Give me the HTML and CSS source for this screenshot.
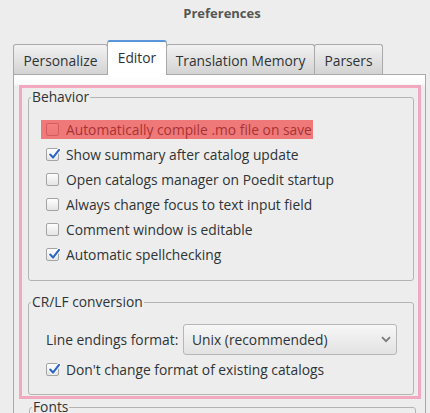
FILE: index.html
```html
<!DOCTYPE html>
<html>
<head>
<meta charset="utf-8">
<link rel="stylesheet" href="styles.css">
</head>
<body>
<div class="window">
  <div class="titlebar">Preferences</div>
  <div class="notebook">
    <div class="tabs">
      <div class="tab tab-personalize">Personalize</div>
      <div class="tab tab-editor active">Editor</div>
      <div class="tab tab-tm">Translation Memory</div>
      <div class="tab tab-parsers">Parsers</div>
    </div>
    <div class="panel">
      <div class="highlight-box">
        <fieldset class="frame">
          <legend>Behavior</legend>
          <div class="rows">
            <div class="row"><span class="item flagged"><span class="check"></span>Automatically compile .mo file on save</span></div>
            <div class="row"><span class="item"><span class="check checked"><svg viewBox="0 0 15 15" width="15" height="15"><path d="M3.2 7.6 L6 10.6 L12 2.8" fill="none" stroke="#ffffff" stroke-width="4" stroke-linecap="round" stroke-linejoin="round"/><path d="M3.2 7.6 L6 10.6 L12 2.8" fill="none" stroke="#2f67c4" stroke-width="2.2" stroke-linecap="round" stroke-linejoin="round"/></svg></span>Show summary after catalog update</span></div>
            <div class="row"><span class="item"><span class="check"></span>Open catalogs manager on Poedit startup</span></div>
            <div class="row"><span class="item"><span class="check"></span>Always change focus to text input field</span></div>
            <div class="row"><span class="item"><span class="check"></span>Comment window is editable</span></div>
            <div class="row"><span class="item"><span class="check checked"><svg viewBox="0 0 15 15" width="15" height="15"><path d="M3.2 7.6 L6 10.6 L12 2.8" fill="none" stroke="#ffffff" stroke-width="4" stroke-linecap="round" stroke-linejoin="round"/><path d="M3.2 7.6 L6 10.6 L12 2.8" fill="none" stroke="#2f67c4" stroke-width="2.2" stroke-linecap="round" stroke-linejoin="round"/></svg></span>Automatic spellchecking</span></div>
          </div>
        </fieldset>
        <fieldset class="frame crlf">
          <legend>CR/LF conversion</legend>
          <div class="rows rows-crlf">
            <div class="select-row">
              <span class="select-label">Line endings format:</span>
              <div class="select">
                <span>Unix (recommended)</span>
                <svg class="chevron" viewBox="0 0 10 7" width="10" height="7"><path d="M1 1.2 L5 5.2 L9 1.2" fill="none" stroke="#7b7b7b" stroke-width="1.8"/></svg>
              </div>
            </div>
            <div class="row row-after-select"><span class="item"><span class="check checked"><svg viewBox="0 0 15 15" width="15" height="15"><path d="M3.2 7.6 L6 10.6 L12 2.8" fill="none" stroke="#ffffff" stroke-width="4" stroke-linecap="round" stroke-linejoin="round"/><path d="M3.2 7.6 L6 10.6 L12 2.8" fill="none" stroke="#2f67c4" stroke-width="2.2" stroke-linecap="round" stroke-linejoin="round"/></svg></span>Don't change format of existing catalogs</span></div>
          </div>
        </fieldset>
      </div>
      <fieldset class="frame fonts">
        <legend>Fonts</legend>
        <div class="fonts-body"></div>
      </fieldset>
    </div>
  </div>
</div>
</body>
</html>
```
FILE: styles.css
```css
html, body {
  margin: 0;
  padding: 0;
  background: #ededed;
}
body {
  font-family: "Open Sans", "Noto Sans", sans-serif;
  font-size: 13.8px;
  color: #2e3436;
}
.window {
  width: 430px;
  height: 413px;
  overflow: hidden;
}
.titlebar {
  height: 26px;
  line-height: 26px;
  text-align: center;
  padding-left: 14px;
  font-weight: bold;
  font-size: 13px;
  color: #555753;
}
.notebook {
  margin: 14px 0 0 13px;
  width: 413px;
}
.tabs {
  display: flex;
  align-items: flex-end;
  height: 34px;
}
.tab {
  box-sizing: border-box;
  height: 30px;
  border: 1px solid #a9a9a9;
  border-bottom: none;
  border-radius: 3px 3px 0 0;
  background: linear-gradient(#f2f2f2, #d3d3d3);
  display: flex;
  align-items: center;
  justify-content: center;
  margin-right: -1px;
  color: #2e3436;
  padding-top: 1px;
}
.tab-personalize { width: 95px; }
.tab-editor { width: 60px; }
.tab-tm { width: 149px; }
.tab-parsers { width: 69px; }
.tab.active {
  height: 35px;
  margin-bottom: -1px;
  background: #ffffff;
  border-top: 2px solid #5a97d8;
  position: relative;
  z-index: 1;
  padding-top: 0;
  padding-bottom: 3px;
}
.panel {
  border: 1px solid #a9a9a9;
  border-bottom: none;
  background: linear-gradient(#ffffff 0, #fbfbfb 9px, #ededed 11px);
  padding: 10px 4px 0 5px;
  height: 400px;
}
.highlight-box {
  border: 3px solid #f2a8bf;
  padding: 1px 4px 1px 6px;
}
.frame {
  margin: 0;
  padding: 0;
  border: 1px solid #b4b4b4;
  border-radius: 3px;
  min-width: 0;
}
.frame legend {
  margin-left: 2px;
  padding: 0 1px;
  line-height: 16px;
  color: #2e3436;
}
.rows {
  padding: 12px 0 13px 12px;
}
.row {
  height: 25px;
  display: flex;
  align-items: center;
}
.item {
  position: relative;
  display: inline-flex;
  align-items: center;
  height: 19px;
  padding: 0 1px 0 5px;
  white-space: nowrap;
}
.flagged::after {
  content: "";
  position: absolute;
  left: 0;
  top: 0;
  right: 0;
  bottom: 0;
  background: rgba(240, 50, 50, 0.62);
}
.check {
  position: relative;
  box-sizing: border-box;
  width: 13px;
  height: 13px;
  margin-right: 7px;
  border: 1px solid #a4a4a4;
  border-radius: 2px;
  background: linear-gradient(#fefefe, #e4e4e4);
  flex: none;
}
.check svg {
  position: absolute;
  left: 0;
  top: -2px;
}
.crlf {
  margin-top: 13px;
}
.rows-crlf {
  padding: 14px 0 12px 12px;
}
.select-row {
  display: flex;
  align-items: center;
  padding-left: 5px;
  height: 31px;
}
.select-label {
  width: 137px;
  flex: none;
  white-space: nowrap;
}
.select {
  box-sizing: border-box;
  width: 214px;
  height: 31px;
  border: 1px solid #b7b7b7;
  border-radius: 3px;
  background: linear-gradient(#f7f7f7, #e2e2e2);
  display: flex;
  align-items: center;
  justify-content: space-between;
  padding: 0 5px 0 8px;
}
.chevron {
  display: block;
}
.row-after-select {
  margin-top: 2px;
}
.fonts {
  margin-left: 10px;
  width: 385px;
}
.fonts-body {
  height: 40px;
}
```
